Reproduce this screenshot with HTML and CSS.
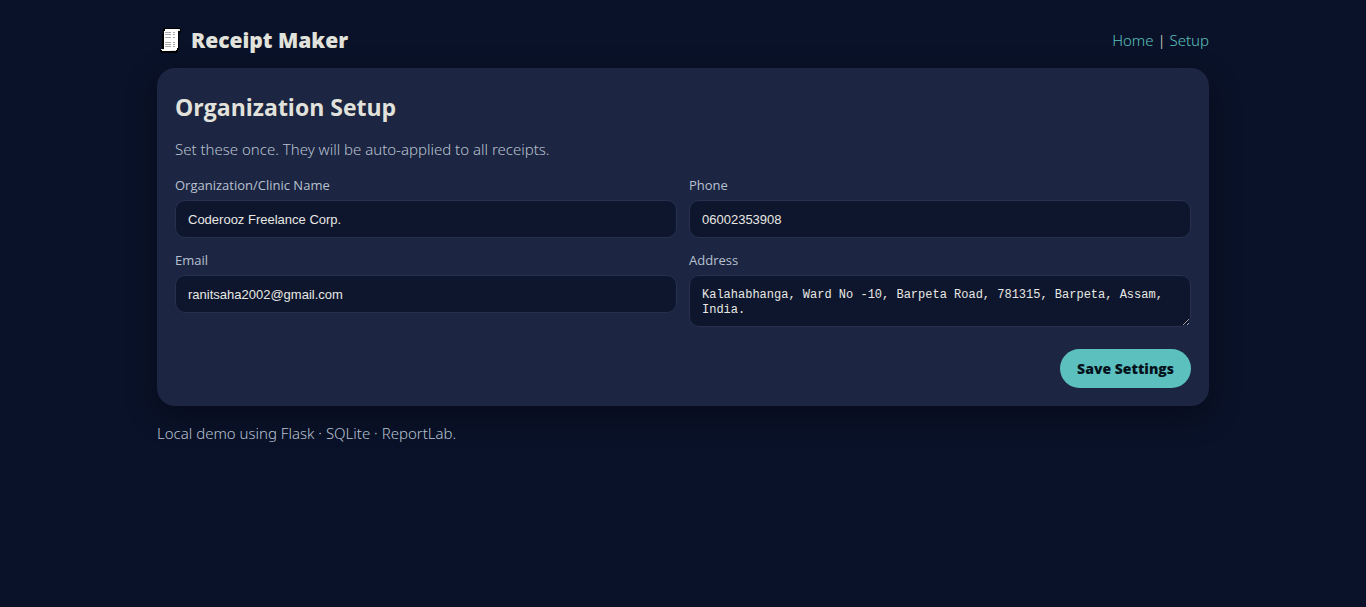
FILE: index.html
```html
<!DOCTYPE html>
<html lang="en">
<head>
<meta charset="utf-8">
<meta name="viewport" content="width=device-width, initial-scale=1">
<title>Receipt Maker</title>
<link rel="stylesheet" href="styles.css">
</head>
<body>
<div class="container">
  <header class="topbar">
    <h1 class="brand">
      <svg class="brand-icon" width="26" height="26" viewBox="0 0 26 26" shape-rendering="crispEdges" aria-hidden="true">
        <path d="M5 1h16l2 1v3l-2 1v16l-1 3-2 1H4l-2-1v-2l2-1V7l1-1z" fill="#000"/>
        <path d="M7 2h14l1 1v1h-2v16l-1 3h-1v1H4l-1-1v-1h3V6z" fill="#fff"/>
        <path d="M20 2h2v2h-2zM13 23h5v1h-5zM3 22h3v1H3z" fill="#ddd"/>
        <path d="M7 5h6v1H7zM7 7h6v1H7zM7 10h6v1H7zM7 15h6v1H7zM7 17h6v1H7zM7 19h6v1H7zM15 5h2v1h-2zM15 7h2v1h-2zM15 10h2v1h-2zM15 15h2v1h-2zM15 17h2v1h-2zM15 19h2v1h-2z" fill="#aaa"/>
      </svg>
      <span>Receipt Maker</span>
    </h1>
    <nav class="nav"><a href="#home">Home</a> | <a href="#setup">Setup</a></nav>
  </header>
  <main class="card">
    <h2 class="title">Organization Setup</h2>
    <p class="hint">Set these once. They will be auto-applied to all receipts.</p>
    <form class="form">
      <div class="grid">
        <div class="field">
          <label for="org">Organization/Clinic Name</label>
          <input class="control" id="org" type="text" value="Coderooz Freelance Corp.">
        </div>
        <div class="field">
          <label for="phone">Phone</label>
          <input class="control" id="phone" type="text" value="06002353908">
        </div>
        <div class="field">
          <label for="email">Email</label>
          <input class="control" id="email" type="email" value="ranitsaha2002@gmail.com">
        </div>
        <div class="field">
          <label for="address">Address</label>
          <textarea class="control address" id="address" rows="2">Kalahabhanga, Ward No -10, Barpeta Road, 781315, Barpeta, Assam, India.</textarea>
        </div>
      </div>
      <div class="actions"><button class="button" type="submit">Save Settings</button></div>
    </form>
  </main>
  <footer class="footer">Local demo using Flask · SQLite · ReportLab.</footer>
</div>
</body>
</html>
```
FILE: styles.css
```css
* { box-sizing: border-box; }
body {
  margin: 0;
  min-height: 100vh;
  background: #0a1229;
  color: #e2e2dc;
  font: 300 15px/22px "Noto Sans", "Open Sans", sans-serif;
}
.container { max-width: 1100px; margin: 0 auto; padding: 24px; }
.topbar {
  display: flex;
  align-items: center;
  justify-content: space-between;
  height: 32px;
  margin-bottom: 12px;
}
.brand {
  display: flex;
  align-items: center;
  gap: 7px;
  margin: 0;
  font-family: "Open Sans", sans-serif;
  font-size: 21px;
  font-weight: 800;
  line-height: 32px;
}
.brand-icon { margin-left: 1px; }
.nav a { color: #5bc0be; text-decoration: none; }
.card {
  padding: 18px;
  border-radius: 18px;
  background: #1c2541;
  box-shadow: 0 10px 30px rgba(0, 0, 0, 0.35);
}
.title { margin: 5px 0 15px; font-family: "Open Sans", sans-serif; font-size: 23px; font-weight: 700; line-height: 32px; }
.hint { margin: 0 0 15px; color: #b8c1d0; }
.grid { display: grid; grid-template-columns: 1fr 1fr; gap: 12px; }
.field { display: flex; flex-direction: column; align-items: stretch; }
.field label {
  margin-bottom: 4px;
  color: #b8c1d0;
  font-family: "Open Sans", sans-serif;
  font-size: 13px;
  font-weight: 400;
  line-height: 21px;
}
.control {
  width: 100%;
  height: 38px;
  margin: 0;
  padding: 10px 12px;
  border: 1px solid #263150;
  border-radius: 10px;
  outline: none;
  background: #0e162e;
  color: #e8e8e2;
  font: 400 13px/16px "Liberation Sans", Arial, sans-serif;
}
.address {
  height: 52px;
  padding-top: 12px;
  padding-bottom: 8px;
  resize: vertical;
  font: 400 12px/15px "Liberation Mono", monospace;
}
.actions { display: flex; justify-content: flex-end; margin-top: 22px; }
.button {
  height: 39px;
  padding: 0 17px;
  border: 0;
  border-radius: 20px;
  background: #5bc0be;
  color: #04121c;
  font: 800 14px/20px "Open Sans", "Noto Sans", sans-serif;
}
.footer { margin-top: 16px; color: #b8c1d0; }
```
